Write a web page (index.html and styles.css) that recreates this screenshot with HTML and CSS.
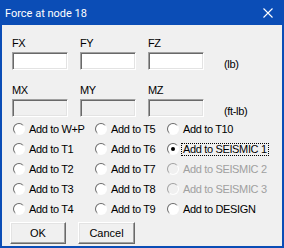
FILE: index.html
```html
<!DOCTYPE html>
<html lang="en">
  <head>
    <meta charset="UTF-8">
    <meta name="viewport" content="width=device-width,initial-scale=1.0">
    <title>Force at node 18</title>
    <link rel="stylesheet" href="styles.css">
  </head>
  <body>
    <div class="window">
      <div class="titlebar">
        <span class="title">Force at node 18</span>
        <svg class="close" width="10" height="10" viewBox="0 0 10 10"><path d="M0.5 0.5L9.5 9.5M9.5 0.5L0.5 9.5" stroke="#fff" stroke-width="1.1" fill="none"/></svg>
      </div>
      <div class="client">
        <div class="fields">
          <div class="field"><span class="lbl">FX</span><span class="edit"></span></div>
          <div class="field"><span class="lbl">FY</span><span class="edit"></span></div>
          <div class="field"><span class="lbl">FZ</span><span class="edit"></span></div>
          <span class="unit">(lb)</span>
        </div>
        <div class="fields off">
          <div class="field"><span class="lbl">MX</span><span class="edit"></span></div>
          <div class="field"><span class="lbl">MY</span><span class="edit"></span></div>
          <div class="field"><span class="lbl">MZ</span><span class="edit"></span></div>
          <span class="unit">(ft-lb)</span>
        </div>
        <div class="radios">
          <label class="radio"><span class="mark"></span><span class="text">Add to W+P</span></label>
          <label class="radio"><span class="mark"></span><span class="text">Add to T5</span></label>
          <label class="radio"><span class="mark"></span><span class="text">Add to T10</span></label>
          <label class="radio"><span class="mark"></span><span class="text">Add to T1</span></label>
          <label class="radio"><span class="mark"></span><span class="text">Add to T6</span></label>
          <label class="radio checked"><span class="mark"></span><span class="text">Add to SEISMIC 1</span></label>
          <label class="radio"><span class="mark"></span><span class="text">Add to T2</span></label>
          <label class="radio"><span class="mark"></span><span class="text">Add to T7</span></label>
          <label class="radio disabled"><span class="mark"></span><span class="text">Add to SEISMIC 2</span></label>
          <label class="radio"><span class="mark"></span><span class="text">Add to T3</span></label>
          <label class="radio"><span class="mark"></span><span class="text">Add to T8</span></label>
          <label class="radio disabled"><span class="mark"></span><span class="text">Add to SEISMIC 3</span></label>
          <label class="radio"><span class="mark"></span><span class="text">Add to T4</span></label>
          <label class="radio"><span class="mark"></span><span class="text">Add to T9</span></label>
          <label class="radio"><span class="mark"></span><span class="text">Add to DESIGN</span></label>
        </div>
        <div class="buttons">
          <button class="btn">OK</button>
          <button class="btn">Cancel</button>
        </div>
      </div>
    </div>
  </body>
</html>
```

FILE: styles.css
```css
:root{--blue:#0b4db6;--face:#f0f0f0;--shadow:#a0a0a0;--dark:#696969;--light:#e3e3e3}
*{box-sizing:border-box}
body{margin:0;width:284px;height:248px;overflow:hidden;font-family:"Liberation Sans",Arial,sans-serif;font-size:11px;color:#000}
.window{width:284px;height:248px;background:var(--blue);padding:0 2px 2px;display:flex;flex-direction:column}
.titlebar{height:25px;flex:none;display:flex;align-items:center;padding:1px 9px 0 3px;color:#fff}
.title{font-family:Roboto,"Noto Sans",sans-serif;font-size:11px;line-height:13px}
.close{margin-left:auto;margin-top:-1px}
.client{flex:1;background:var(--face);padding:12px 0 0 10px;letter-spacing:-.35px}
.fields{display:flex;align-items:flex-end;gap:12px;margin-bottom:14px}
.fields.off{margin-bottom:2px}
.field{display:flex;flex-direction:column;width:56px}
.lbl{line-height:13px;margin-bottom:2px}
.edit{height:18px;background:#fff;border:1px solid;border-color:var(--shadow) #fff #fff var(--shadow);box-shadow:inset 1px 1px 0 var(--dark),inset -1px -1px 0 var(--light)}
.off .edit{background:var(--face)}
.unit{line-height:13px;margin-left:8px;margin-bottom:-1px}
.radios{display:grid;grid-template-columns:82px 72px 1fr;grid-auto-rows:20px;margin-left:1px}
.radio{display:flex;align-items:center;white-space:nowrap}
.mark{position:relative;width:12px;height:12px;flex:none;margin-right:3px;border-radius:50%;background:linear-gradient(135deg,var(--dark) 0 42%,#fff 58%)}
.mark::before{content:"";position:absolute;inset:1px 0 0 1px;width:10px;height:10px;border-radius:50%;background:#fff}
.text{line-height:11px;padding:0 1px}
.checked .mark::after{content:"";position:absolute;left:4px;top:4px;width:4px;height:4px;border-radius:50%;background:#000}
.checked .text{outline:1px dotted #000}
.disabled{color:var(--shadow)}
.disabled .mark{background:linear-gradient(135deg,var(--shadow) 0 42%,#fff 58%)}
.disabled .mark::before{background:var(--face)}
.buttons{display:flex;gap:12px;margin:3px 0 0 -2px}
.btn{width:56px;height:22px;padding:0;font:inherit;letter-spacing:0;color:#000;background:var(--face);border:1px solid;border-color:#fff var(--dark) var(--dark) #fff;box-shadow:inset -1px -1px 0 var(--shadow),inset 1px 1px 0 var(--light)}
.btn+.btn{width:57px}
```
